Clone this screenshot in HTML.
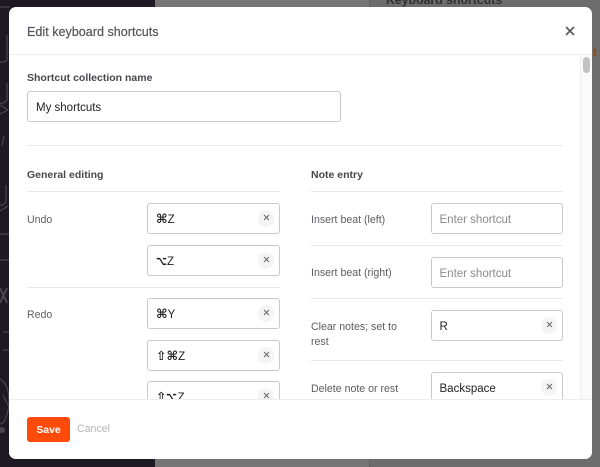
<!DOCTYPE html>
<html>
<head>
<meta charset="utf-8">
<style>
html,body{margin:0;padding:0}
body{width:600px;height:467px;overflow:hidden;position:relative;background:#6c6c6c;font-family:"Liberation Sans",sans-serif;color:#4a4a52}
.abs{position:absolute}
.bgL{left:0;top:0;width:155px;height:467px;background:#1e1a23}
.bgM{left:155px;top:0;width:214px;height:467px;background:#767676}
.line{position:absolute;background:#e9e9e9;height:1px}
.modal{left:9px;top:7px;width:583px;height:452px;background:#fff;border-radius:7px;overflow:hidden}
.t{position:absolute;white-space:nowrap;font-size:10.6px;line-height:14px;margin-top:1px;color:#5c5c63}
.b{font-weight:bold;color:#47474e;font-size:10.5px}
.inp{position:absolute;box-sizing:border-box;background:#fff;border:1px solid #c9c9c9;border-bottom-width:1.5px;border-radius:3px;height:31px;font-size:11.5px;line-height:32px;padding-left:8px;color:#222;white-space:nowrap;font-family:"Liberation Sans","DejaVu Sans",sans-serif}
.ph{color:#8a8a8a}
.x{position:absolute;right:5px;top:6px;width:16.5px;height:16.5px;border-radius:50%;background:#f4f4f4}
.x svg{position:absolute;left:5px;top:4px}
.g{font-size:12.5px;font-weight:bold;line-height:1}
.o{display:inline-block;width:11px;transform:scaleX(.76);transform-origin:left center}
</style>
</head>
<body>
<div class="abs bgL"></div>
<div class="abs bgM"></div>
<div class="abs" style="left:369px;top:0;width:1px;height:467px;background:#626262"></div>
<div class="abs" style="left:386px;top:-7px;font-size:12.3px;line-height:14px;font-weight:bold;color:#303030;white-space:nowrap">Keyboard shortcuts</div>
<div class="abs" style="left:593px;top:46px;font-size:11px;line-height:14px;font-weight:bold;color:#8a4a16">t</div>
<svg class="abs" style="left:0;top:0" width="10" height="467">
<g stroke="#4a4650" fill="none" stroke-width="1.2">
<path d="M7 35V60Q4 63 0 62"/><path d="M7 83V100Q4 104 0 103"/><path d="M0 105L8 110L0 114"/>
<path d="M4 136L2 146"/><path d="M6 185V202Q3 206 0 205M0 211L8 206"/>
<path d="M0 234H10M0 260H10"/><path d="M0 288L7 303M0 303L7 288" stroke-width="2"/>
<path d="M3 332H10M3 350H10"/><path d="M0 379Q10 385 9 405Q6 424 0 424M3 395L8 405"/>
<path d="M0 7H10"/>
</g>
<circle cx="2" cy="430" r="3" fill="#4a4650"/>
</svg>

<div class="abs modal">
  <div class="t" style="left:18px;top:16px;font-size:12.6px;line-height:16px;color:#55555c;-webkit-text-stroke:.2px #55555c">Edit keyboard shortcuts</div>
  <svg class="abs" style="left:556px;top:19px" width="10" height="10"><path d="M1 1L9 9M9 1L1 9" stroke="#5c5c5c" stroke-width="1.7"/></svg>
  <div class="line" style="left:0;top:47px;width:583px;background:#eeeeee"></div>

  <div class="abs" style="left:571px;top:48px;width:12px;height:344px;background:#fafafa;border-left:1px solid #efefef;box-sizing:border-box"></div>
  <div class="abs" style="left:574px;top:50px;width:7px;height:16px;background:#c2c2c2;border-radius:4px"></div>

  <div class="t b" style="left:18px;top:63px">Shortcut collection name</div>
  <div class="inp" style="left:18px;top:84px;width:314px">My shortcuts</div>
  <div class="line" style="left:18px;top:138px;width:536px"></div>

  <div class="t b" style="left:18px;top:160px">General editing</div>
  <div class="line" style="left:18px;top:184px;width:253px"></div>
  <div class="t" style="left:18px;top:205px">Undo</div>
  <div class="inp" style="left:138px;top:196px;width:133px"><span class="g">⌘</span>Z<span class="x"><svg width="7" height="7"><path d="M1 1L6 6M6 1L1 6" stroke="#666" stroke-width="1"/></svg></span></div>
  <div class="inp" style="left:138px;top:238px;width:133px"><span class="g o">⌥</span>Z<span class="x"><svg width="7" height="7"><path d="M1 1L6 6M6 1L1 6" stroke="#666" stroke-width="1"/></svg></span></div>
  <div class="line" style="left:18px;top:280px;width:253px"></div>
  <div class="t" style="left:18px;top:300px">Redo</div>
  <div class="inp" style="left:138px;top:291px;width:133px"><span class="g">⌘</span>Y<span class="x"><svg width="7" height="7"><path d="M1 1L6 6M6 1L1 6" stroke="#666" stroke-width="1"/></svg></span></div>
  <div class="inp" style="left:138px;top:333px;width:133px"><span class="g">⇧⌘</span>Z<span class="x"><svg width="7" height="7"><path d="M1 1L6 6M6 1L1 6" stroke="#666" stroke-width="1"/></svg></span></div>
  <div class="inp" style="left:138px;top:374px;width:133px"><span class="g">⇧</span><span class="g o">⌥</span>Z<span class="x"><svg width="7" height="7"><path d="M1 1L6 6M6 1L1 6" stroke="#666" stroke-width="1"/></svg></span></div>

  <div class="t b" style="left:302px;top:160px">Note entry</div>
  <div class="line" style="left:302px;top:184px;width:252px"></div>
  <div class="t" style="left:302px;top:205px">Insert beat (left)</div>
  <div class="inp ph" style="left:421.5px;top:196px;width:132.5px">Enter shortcut</div>
  <div class="line" style="left:302px;top:238px;width:252px"></div>
  <div class="t" style="left:302px;top:258px">Insert beat (right)</div>
  <div class="inp ph" style="left:421.5px;top:250px;width:132.5px">Enter shortcut</div>
  <div class="line" style="left:302px;top:291px;width:252px"></div>
  <div class="t" style="left:302px;top:312px">Clear notes; set to</div>
  <div class="t" style="left:302px;top:327px">rest</div>
  <div class="inp" style="left:421.5px;top:303px;width:132.5px">R<span class="x"><svg width="7" height="7"><path d="M1 1L6 6M6 1L1 6" stroke="#666" stroke-width="1"/></svg></span></div>
  <div class="line" style="left:302px;top:353px;width:252px"></div>
  <div class="t" style="left:302px;top:374px">Delete note or rest</div>
  <div class="inp" style="left:421.5px;top:365px;width:132.5px">Backspace<span class="x"><svg width="7" height="7"><path d="M1 1L6 6M6 1L1 6" stroke="#666" stroke-width="1"/></svg></span></div>

  <div class="abs" style="left:0;top:392px;width:583px;height:60px;background:#fff;border-top:1px solid #eeeeee;box-sizing:border-box"></div>
  <div class="abs" style="left:18px;top:410px;width:43px;height:25px;background:#ff4a0a;border-radius:3px;color:#fff;font-size:10.5px;font-weight:bold;line-height:26px;text-align:center">Save</div>
  <div class="t" style="left:68px;top:414px;color:#b5b5b5">Cancel</div>
</div>
</body>
</html>
